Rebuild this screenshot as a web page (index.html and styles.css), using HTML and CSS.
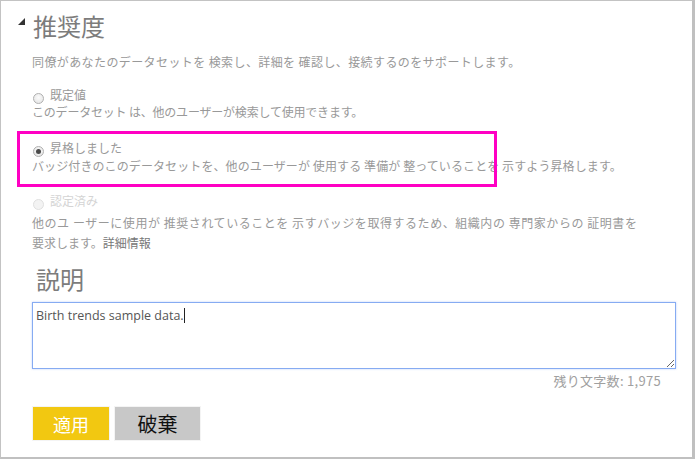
FILE: index.html
```html
<!DOCTYPE html>
<html lang="ja">
<head>
<meta charset="utf-8">
<link rel="stylesheet" href="styles.css">
</head>
<body>
<div class="panel">
  <div class="section-head">
    <svg class="caret-icon" width="7" height="7" viewBox="0 0 7 7"><polygon points="7,0 7,7 0,7" fill="#333"/></svg>
    <h2 class="title">推奨度</h2>
  </div>
  <p class="intro">同僚があなたのデータセットを 検索し、詳細を 確認し、接続するのをサポートします。</p>

  <div class="option">
    <div class="option-label"><span class="radio"></span><span>既定値</span></div>
    <p class="option-desc narrow">このデータセット は、他のユーザーが検索して使用できます。</p>
  </div>

  <div class="option option-promoted">
    <div class="option-label"><span class="radio radio-checked"></span><span>昇格しました</span></div>
    <p class="option-desc tall">バッジ付きのこのデータセットを、他のユーザーが 使用する 準備が 整っていることを 示すよう昇格します。</p>
  </div>

  <div class="option option-certified">
    <div class="option-label disabled"><span class="radio radio-disabled"></span><span>認定済み</span></div>
    <p class="option-desc wrap"><span class="wide">他のユ ーザーに使用が 推奨されていることを 示すバッジを取得するため、組織内の 専門家からの 証明書を</span><br>要求します。<a class="link">詳細情報</a></p>
  </div>

  <h2 class="title title-desc">説明</h2>
  <div class="textbox">Birth trends sample data.<span class="text-caret"></span></div>
  <div class="counter">残り文字数: 1,975</div>

  <div class="actions">
    <button class="btn btn-apply">適用</button>
    <button class="btn btn-discard">破棄</button>
  </div>

  <div class="highlight"></div>
</div>
</body>
</html>
```

FILE: styles.css
```css
html, body {
  margin: 0;
  padding: 0;
  background: #fff;
}

body {
  font-family: "Noto Sans CJK JP", "Noto Sans", sans-serif;
  color: #999;
}

.panel {
  position: relative;
  box-sizing: border-box;
  width: 695px;
  height: 459px;
  border-top: 1px solid #c3c3c3;
  border-left: 1px solid #c3c3c3;
  border-right: 3px solid #c0c0c0;
  border-bottom: 2px solid #c0c0c0;
  padding: 9px 0 0 31px;
}

.section-head {
  display: flex;
  align-items: center;
  margin-left: -14px;
  gap: 8px;
}

.caret-icon {
  flex: none;
  margin-top: -10px;
}

.title {
  margin: 0;
  font-weight: normal;
  font-size: 24px;
  line-height: 32px;
  color: #7c7c7c;
}

.intro {
  margin: 11px 0 0;
  font-size: 12px;
  line-height: 18px;
  letter-spacing: 0.4px;
}

.option {
  margin-top: 16px;
}

.option-promoted {
  margin-top: 20px;
}

.option-certified {
  margin-top: 18px;
}

.option-label {
  display: flex;
  align-items: flex-start;
  gap: 6px;
  font-size: 12px;
  line-height: 16px;
  color: #999;
  margin-left: 1px;
}

.option-label.disabled {
  color: #d4d4d4;
}

.radio {
  flex: none;
  box-sizing: border-box;
  width: 11px;
  height: 11px;
  margin-top: 6px;
  border-radius: 50%;
  border: 1px solid #b0b0b0;
  background: radial-gradient(circle at 50% 40%, #fbfbfb 0%, #e2e2e2 100%);
  position: relative;
}

.radio-checked::after {
  content: "";
  position: absolute;
  left: 2px;
  top: 2px;
  width: 5px;
  height: 5px;
  border-radius: 50%;
  background: #4a4a4a;
}

.radio-disabled {
  border-color: #e0e0e0;
  background: #f3f3f3;
}

.option-desc {
  margin: 0;
  font-size: 12px;
  line-height: 16px;
}

.option-desc.narrow {
  letter-spacing: -0.2px;
}

.option-desc.tall {
  line-height: 18px;
  letter-spacing: 0.1px;
}

.option-desc.wrap {
  margin-top: 3px;
  line-height: 20px;
}

.wide {
  letter-spacing: 0.55px;
}

.link {
  color: #777;
}

.title-desc {
  margin: 10px 0 0 4px;
}

.textbox {
  box-sizing: border-box;
  width: 644px;
  height: 67px;
  margin-top: 7px;
  padding: 4px 3px;
  border: 1px solid #86abf2;
  box-shadow: 0 0 2px rgba(110, 150, 240, 0.45);
  font-family: "Open Sans", "Noto Sans", sans-serif;
  font-size: 12.5px;
  line-height: 17px;
  color: #555;
  resize: both;
  overflow: auto;
}

.text-caret {
  display: inline-block;
  width: 1px;
  height: 15px;
  background: #222;
  vertical-align: -3px;
}

.counter {
  width: 629px;
  margin-top: 4px;
  text-align: right;
  font-size: 13px;
  line-height: 16px;
  letter-spacing: 0.3px;
  color: #a0a0a0;
}

.actions {
  display: flex;
  gap: 4px;
  margin-top: 17px;
}

.btn {
  box-sizing: border-box;
  height: 35px;
  border: 1px solid #f4f4f4;
  padding: 0;
  font-family: "Noto Sans CJK JP", sans-serif;
  cursor: pointer;
}

.btn-apply {
  width: 78px;
  background: #f2c811;
  color: #fff;
  font-size: 18px;
}

.btn-discard {
  width: 87px;
  background: #c8c8c8;
  color: #111;
  font-size: 20px;
}

.highlight {
  position: absolute;
  left: 16px;
  top: 130px;
  width: 480px;
  height: 56px;
  box-sizing: border-box;
  border: 3px solid #ff00c3;
  pointer-events: none;
}
```
